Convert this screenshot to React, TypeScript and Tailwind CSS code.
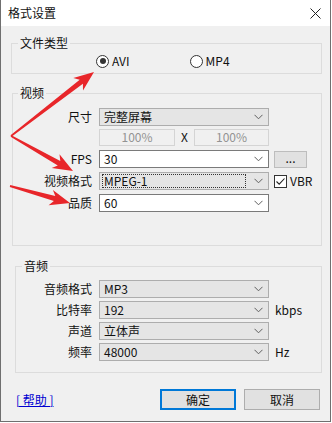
import React from 'react'

type Pt = [number, number]

function arrowPoints(from: Pt, tip: Pt) {
  const dx = tip[0] - from[0]
  const dy = tip[1] - from[1]
  const len = Math.hypot(dx, dy)
  const ux = dx / len
  const uy = dy / len
  const nx = -uy
  const ny = ux
  const L = 20
  const W = 8
  const bx = tip[0] - ux * L
  const by = tip[1] - uy * L
  const p = (x: number, y: number) => `${x.toFixed(1)},${y.toFixed(1)}`
  return [
    p(from[0] + nx * 0.9, from[1] + ny * 0.9),
    p(bx + ux * 4 + nx * 2.6, by + uy * 4 + ny * 2.6),
    p(bx + nx * W, by + ny * W),
    p(tip[0], tip[1]),
    p(bx - nx * W, by - ny * W),
    p(bx + ux * 4 - nx * 2.6, by + uy * 4 - ny * 2.6),
    p(from[0] - nx * 0.9, from[1] - ny * 0.9),
  ].join(' ')
}

function Chevron() {
  return (
    <svg width="9" height="6" viewBox="0 0 9 6" className="shrink-0">
      <path d="M0.5 0.8 L4.5 4.8 L8.5 0.8" fill="none" stroke="#606060" strokeWidth="1" />
    </svg>
  )
}

function Combo({ value, editable, focused }: { value: string; editable?: boolean; focused?: boolean }) {
  return (
    <div
      className={`flex h-[18px] w-[170px] shrink-0 items-center pr-[5px] pl-[2px] border ${
        editable ? 'border-[#7a7a7a] bg-white' : 'border-[#adadad] bg-[#e5e5e5]'
      }`}
    >
      <div className="flex-1">
        <span
          className={`flex h-[14px] items-center pl-[1px] ${
            focused ? 'mr-[8px] border border-dotted border-[#333]' : 'border border-transparent'
          }`}
        >
          {value}
        </span>
      </div>
      <Chevron />
    </div>
  )
}

function Row({ label, labelW, children, className = '' }: { label: string; labelW: string; children: React.ReactNode; className?: string }) {
  return (
    <div className={`flex h-[18px] items-center ${className}`}>
      <span className={`${labelW} shrink-0 text-right`}>{label}</span>
      <div className="ml-[7px] flex items-center">{children}</div>
    </div>
  )
}

function Radio({ checked, label }: { checked?: boolean; label: string }) {
  return (
    <div className="flex items-center">
      <span className="flex h-[13px] w-[13px] items-center justify-center rounded-full border border-[#333] bg-white">
        {checked && <span className="h-[6px] w-[6px] rounded-full bg-[#333]" />}
      </span>
      <span className="ml-[3px]">{label}</span>
    </div>
  )
}

export default function App() {
  return (
    <div className="h-[423px] w-[332px] bg-white font-['Noto_Sans_CJK_SC','Noto_Sans',sans-serif] text-[12px] leading-[16px] text-[#111]">
      <div className="relative flex h-[422px] w-[331px] flex-col border-x border-b border-[#6f6f6f] bg-[#f0f0f0]">
        {/* title bar */}
        <div className="flex h-[26px] shrink-0 items-center justify-between bg-white pl-[7px] pr-[9px]">
          <span className="text-[12px]">格式设置</span>
          <svg width="11" height="11" viewBox="0 0 11 11">
            <path d="M0.5 0.5 L10.5 10.5 M10.5 0.5 L0.5 10.5" stroke="#222" strokeWidth="1" />
          </svg>
        </div>

        {/* 文件类型 */}
        <fieldset className="ml-[10px] mt-[9px] w-[311px] border border-[#dcdcdc]">
          <legend className="ml-[6px] px-[2px]">文件类型</legend>
          <div className="flex h-[22px] items-center pb-[2px] pl-[84px]">
            <Radio checked label="AVI" />
            <div className="ml-[60px]">
              <Radio label="MP4" />
            </div>
          </div>
        </fieldset>

        {/* 视频 */}
        <fieldset className="ml-[11px] mt-[11px] w-[310px] border border-[#dcdcdc] pb-[33px] pt-[7px]">
          <legend className="ml-[5px] px-[2px]">视频</legend>
          <Row label="尺寸" labelW="w-[79px]">
            <Combo value="完整屏幕" />
          </Row>
          <Row label="" labelW="w-[79px]" className="mt-[2px]">
            <div className="flex h-[17px] w-[76px] items-center justify-center border border-[#d4d4d4] bg-[#f0f0f0] text-[#939393]">100%</div>
            <span className="w-[19px] text-center">X</span>
            <div className="flex h-[17px] w-[75px] items-center justify-center border border-[#d4d4d4] bg-[#f0f0f0] text-[#939393]">100%</div>
          </Row>
          <Row label="FPS" labelW="w-[79px]" className="mt-[4px]">
            <Combo value="30" editable />
            <div className="ml-[5px] flex h-[17px] w-[33px] items-center justify-center border border-[#bdbdbd] bg-[#e1e1e1] pb-[3px]">...</div>
          </Row>
          <Row label="视频格式" labelW="w-[79px]" className="mt-[4px]">
            <Combo value="MPEG-1" focused />
            <div className="ml-[5px] flex items-center">
              <span className="flex h-[13px] w-[13px] items-center justify-center border border-[#333] bg-white">
                <svg width="11" height="11" viewBox="0 0 11 11">
                  <path d="M1.5 5.5 L4.2 8.2 L9.5 2.5" fill="none" stroke="#222" strokeWidth="1.1" />
                </svg>
              </span>
              <span className="ml-[3px]">VBR</span>
            </div>
          </Row>
          <Row label="品质" labelW="w-[79px]" className="mt-[4px]">
            <Combo value="60" editable />
          </Row>
        </fieldset>

        {/* 音频 */}
        <fieldset className="ml-[14px] mt-[12px] w-[307px] border border-[#dcdcdc] pb-[11px] pt-[6px]">
          <legend className="ml-[6px] px-[2px]">音频</legend>
          <Row label="音频格式" labelW="w-[76px]">
            <Combo value="MP3" />
          </Row>
          <Row label="比特率" labelW="w-[76px]" className="mt-[3px]">
            <Combo value="192" />
            <span className="ml-[6px]">kbps</span>
          </Row>
          <Row label="声道" labelW="w-[76px]" className="mt-[3px]">
            <Combo value="立体声" />
          </Row>
          <Row label="频率" labelW="w-[76px]" className="mt-[3px]">
            <Combo value="48000" />
            <span className="ml-[6px]">Hz</span>
          </Row>
        </fieldset>

        {/* bottom buttons */}
        <div className="mt-[16px] flex items-center pl-[15px] pr-[10px]">
          <span className="text-[#0000d0] underline">[ 帮助 ]</span>
          <div className="ml-auto flex gap-[8px]">
            <button className="flex h-[21px] w-[76px] items-center justify-center border-2 border-[#0078d7] bg-[#e1e1e1]">确定</button>
            <button className="flex h-[21px] w-[76px] items-center justify-center border border-[#adadad] bg-[#e1e1e1]">取消</button>
          </div>
        </div>

        {/* annotation arrows */}
        <svg className="pointer-events-none absolute left-0 top-0" width="332" height="423">
          <polygon points={arrowPoints([10, 136], [93, 72])} fill="#e8262a" />
          <polygon points={arrowPoints([10, 136], [72, 171])} fill="#e8262a" />
          <polygon points={arrowPoints([9, 186], [69, 203])} fill="#e8262a" />
        </svg>
      </div>
    </div>
  )
}
